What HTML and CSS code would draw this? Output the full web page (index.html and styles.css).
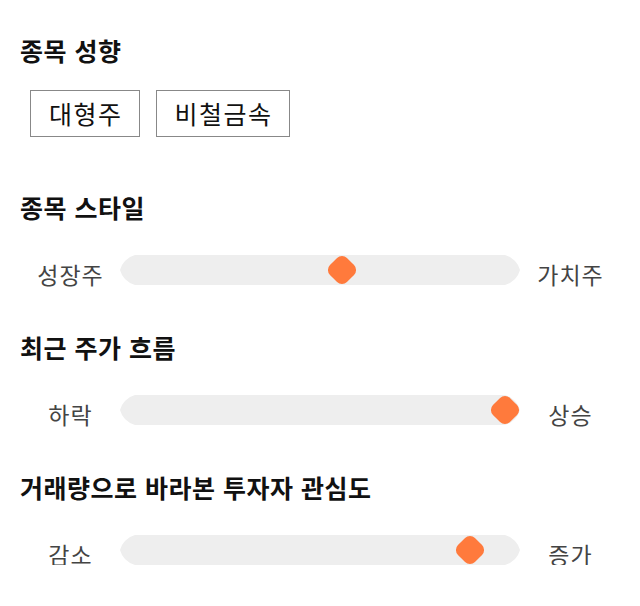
FILE: index.html
```html
<!DOCTYPE html>
<html lang="ko">
<head>
    <title>종목 분석</title>
    <meta charset="utf-8">
    <link rel="stylesheet" href="styles.css">
</head>
<body>
    <main class="panel">
        <section class="group">
            <h2 class="title">종목 성향</h2>
            <div class="tags">
                <span class="tag">대형주</span>
                <span class="tag">비철금속</span>
            </div>
        </section>
        <section class="group group-first">
            <h2 class="title">종목 스타일</h2>
            <div class="scale">
                <span class="scale-label">성장주</span>
                <div class="track"><div class="rail"><span class="thumb" style="left: 56%"></span></div></div>
                <span class="scale-label">가치주</span>
            </div>
        </section>
        <section class="group">
            <h2 class="title">최근 주가 흐름</h2>
            <div class="scale">
                <span class="scale-label">하락</span>
                <div class="track"><div class="rail"><span class="thumb" style="left: 100%"></span></div></div>
                <span class="scale-label">상승</span>
            </div>
        </section>
        <section class="group">
            <h2 class="title">거래량으로 바라본 투자자 관심도</h2>
            <div class="scale">
                <span class="scale-label">감소</span>
                <div class="track"><div class="rail"><span class="thumb" style="left: 90.5%"></span></div></div>
                <span class="scale-label">증가</span>
            </div>
        </section>
    </main>
</body>
</html>
```

FILE: styles.css
```css
html {
    font-family: "Noto Sans CJK KR", "Noto Sans", sans-serif;
}
body {
    margin: 0;
    background: #fff;
    color: #111;
}
.panel {
    padding: 33px 20px 0;
}
.group + .group {
    margin-top: 45px;
}
.group.group-first {
    margin-top: 53px;
}
.title {
    margin: 0;
    font-size: 25px;
    line-height: 34px;
    font-weight: bold;
    letter-spacing: 0.5px;
}
.tags {
    display: flex;
    gap: 16px;
    margin: 23px 0 0 10px;
}
.tag {
    display: block;
    height: 45px;
    padding: 0 16px 0 18px;
    border: 1px solid #888;
    font-size: 25px;
    line-height: 45px;
    letter-spacing: 1.5px;
    color: #111;
}
.scale {
    display: grid;
    grid-template-columns: 100px 400px 100px;
    align-items: start;
    margin-top: 31px;
}
.scale-label {
    height: 30px;
    padding-top: 9px;
    box-sizing: border-box;
    font-size: 23px;
    line-height: 21px;
    letter-spacing: 1px;
    text-indent: 1px;
    text-align: center;
    color: #444;
}
.track {
    height: 30px;
    background: #eee;
    clip-path: polygon(15px 0, calc(100% - 15px) 0, calc(100% - 10px) 2px, calc(100% - 5px) 6px, calc(100% - 2px) 10px, 100% 15px, calc(100% - 2px) 20px, calc(100% - 5px) 24px, calc(100% - 10px) 28px, calc(100% - 15px) 30px, 15px 30px, 10px 28px, 5px 24px, 2px 20px, 0 15px, 2px 10px, 5px 6px, 10px 2px);
}
.rail {
    position: relative;
    height: 30px;
    margin: 0 15px;
}
.thumb {
    position: absolute;
    top: 50%;
    width: 24px;
    height: 24px;
    border-radius: 7px;
    background: #ff7a3c;
    transform: translate(-50%, -50%) rotate(45deg);
}
```
